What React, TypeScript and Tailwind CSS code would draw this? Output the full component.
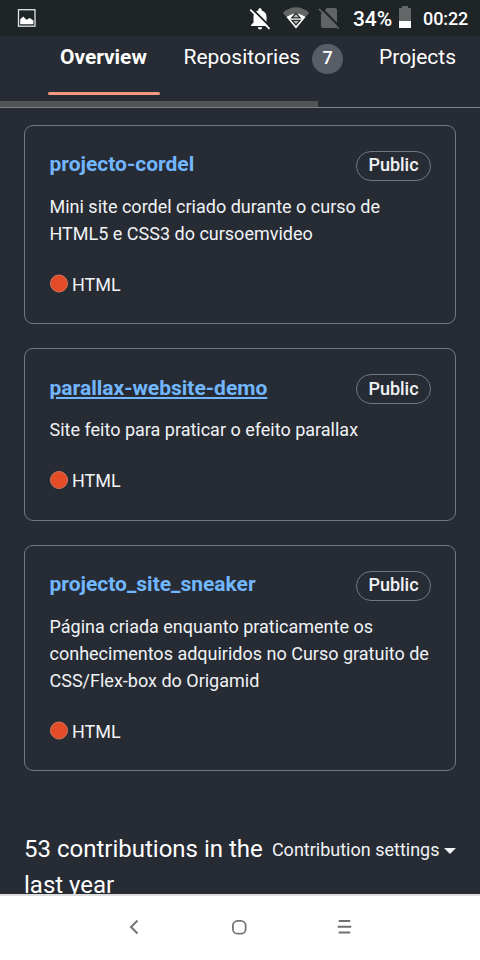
import React from "react";

type Repo = {
  name: string;
  lines: string[];
  height: string;
  underlined?: boolean;
};

const repos: Repo[] = [
  {
    name: "projecto-cordel",
    lines: ["Mini site cordel criado durante o curso de", "HTML5 e CSS3 do cursoemvideo"],
    height: "h-[199px]",
  },
  {
    name: "parallax-website-demo",
    lines: ["Site feito para praticar o efeito parallax"],
    height: "h-[173px]",
    underlined: true,
  },
  {
    name: "projecto_site_sneaker",
    lines: [
      "Página criada enquanto praticamente os",
      "conhecimentos adquiridos no Curso gratuito de",
      "CSS/Flex-box do Origamid",
    ],
    height: "h-[226px]",
  },
];

function StatusBar() {
  return (
    <div className="flex h-9 shrink-0 items-center bg-[#1f2427] text-white">
      <svg className="ml-[17px] h-5 w-5" viewBox="0 0 20 20">
        <rect x="1.5" y="1.7" width="16.500" height="16.500" fill="none" stroke="#dfe4e4" strokeWidth="1.300" />
        <path d="M3.200 16.200v-5l3-2.700 3.200 3.200 3.400-1.700 3.600 2.600v3.600z" fill="#fff" />
      </svg>
      <svg className="ml-[212px] h-6 w-[22px] translate-y-px" viewBox="0 0 22 24">
        <path
          d="M11 1.2c1 0 1.700.7 1.700 1.700v.6c3 .8 4.800 3.200 4.800 6.200v6.200l2 2v1H2v-1l2.500-2.300v-5.900c0-3 1.800-5.400 4.800-6.200v-.6c0-1 .7-1.700 1.700-1.700z"
          fill="#fff"
        />
        <path d="M8.800 20.200h4.400a2.200 2.200 0 0 1-4.400 0z" fill="#fff" />
        <path d="M2.700 1.300 22 20.600" stroke="#1f2427" strokeWidth="2" />
        <path d="M1.300 2.600 20.500 21.800" stroke="#fff" strokeWidth="1.800" />
      </svg>
      <svg className="ml-[11px] h-6 w-7" viewBox="0 0 28 24">
        <path d="M.8 6.700Q14-4.300 27.200 6.700L14 22.500z" fill="#626666" />
        <path d="M4.500 11Q14 3.800 23.500 11L14 22.500z" fill="#fff" />
        <path d="M10 11.800 14 7.200l4 4.600zM10 14.300l4 4.600 4-4.600z" fill="#bbb" stroke="#2b3031" strokeWidth="1.300" />
      </svg>
      <svg className="ml-2 h-6 w-6" viewBox="0 0 24 24">
        <path d="M9 2h8q2 0 2 2v16q0 2-2 2H5q-2 0-2-2V8z" fill="#606465" />
        <path d="M3 1.800 22 21.200" stroke="#1f2427" strokeWidth="2" />
        <path d="M1 3 20.600 22.700" stroke="#606465" strokeWidth="1.700" />
      </svg>
      <span className="ml-[11px] w-[40px] translate-y-px whitespace-nowrap text-[21px] leading-9 font-medium tracking-[-0.1px]">
        34%
      </span>
      <svg className="ml-[6px] h-[22px] w-3 -translate-y-px" viewBox="0 0 12 22">
        <path d="M3 0h6v2h3v13H0V2h3z" fill="#626666" />
        <path d="M0 15h12v7H0z" fill="#fff" />
      </svg>
      <span className="ml-3 translate-y-px whitespace-nowrap text-[18px] leading-9 font-medium tracking-[-0.1px]">00:22</span>
    </div>
  );
}

function Tabs() {
  return (
    <nav className="flex h-[72px] shrink-0 flex-col border-b border-[#7a828e] text-white">
      <div className="flex h-[59px] pl-[47.5px] text-[21px] leading-[31px]">
        <div className="flex w-[112px] flex-col justify-between">
          <span className="mt-[6px] pl-[12.5px] font-bold tracking-[-0.05px]">Overview</span>
          <span className="h-[3.500px] rounded-full bg-[#f59680]" />
        </div>
        <span className="mt-[6px] ml-6 w-[117px]">Repositories</span>
        <span className="mt-[8px] ml-[11.5px] h-[30px] w-[31px] rounded-full bg-[#585d66] text-center text-[18px] leading-[28px] font-medium">
          7
        </span>
        <span className="mt-[6px] ml-9">Projects</span>
      </div>
      <div className="mt-auto h-[6px] w-[318px] bg-[#535456]" />
    </nav>
  );
}

function RepoCard({ repo }: { repo: Repo }) {
  return (
    <article
      className={`flex flex-col rounded-[9px] border border-[#727782] pt-[23px] pr-[25px] pl-[24.5px] text-[#f0f3f6] ${repo.height}`}
    >
      <div className="flex h-[44px] items-start justify-between">
        <a
          className={`text-[21px] leading-[31px] font-bold text-[#71b7ff] ${
            repo.underlined ? "mt-px underline decoration-2 underline-offset-2" : ""
          }`}
        >
          {repo.name}
        </a>
        <span
          className={`mt-[2px] -mr-px h-[30px] w-[75px] rounded-full border border-[#727782] text-center text-[18px] font-medium ${
            repo.underlined ? "leading-[28px]" : "leading-[26px]"
          }`}
        >
          Public
        </span>
      </div>
      <p className="text-[18px] leading-[27px] whitespace-nowrap">
        {repo.lines.map((line) => (
          <span className="block" key={line}>
            {line}
          </span>
        ))}
      </p>
      <div className="mt-6 flex items-center text-[18px] leading-[27px]">
        <span
          className={`mr-[4.5px] h-[18px] w-[18px] rounded-full border border-[#d17661] bg-[#e34c26] ${
            repo.underlined ? "-translate-y-px" : "-translate-y-[1.500px]"
          }`}
        />
        HTML
      </div>
    </article>
  );
}

function NavigationBar() {
  return (
    <div className="flex h-[66px] shrink-0 items-center border-t-2 border-[#dedede] bg-white pb-[3px]">
      <svg className="ml-[126px] h-4 w-4" viewBox="0 0 16 16" fill="none" stroke="#757575" strokeWidth="2">
        <path d="M11.500 1.500 5 8l6.500 6.500" />
      </svg>
      <svg className="ml-[89px] h-4 w-4" viewBox="0 0 16 16" fill="none" stroke="#757575" strokeWidth="1.800">
        <rect x="1.900" y="1.900" width="12.800" height="12.800" rx="4.800" />
      </svg>
      <svg className="ml-[89px] h-4 w-4" viewBox="0 0 16 16" stroke="#707070" strokeWidth="2" strokeLinecap="round">
        <path d="M3.500 2h10M2.500 7.800h12M3.500 13.500h10" />
      </svg>
    </div>
  );
}

export default function App() {
  return (
    <div className="flex h-[960px] w-[480px] flex-col overflow-hidden bg-[#272b33] font-[Roboto,sans-serif]">
      <StatusBar />
      <Tabs />
      <main className="min-h-0 flex-1 overflow-hidden px-6 pt-[17px]">
        <div className="flex flex-col gap-6">
          {repos.map((repo) => (
            <RepoCard key={repo.name} repo={repo} />
          ))}
        </div>
        <div className="mt-[60px] flex items-start justify-between text-white">
          <h2 className="text-[24px] leading-9 whitespace-nowrap">
            53 contributions in the
            <br />
            last year
          </h2>
          <div className="mt-[5px] flex items-center text-[18px] leading-[27px] whitespace-nowrap text-[#f0f3f6]">
            Contribution settings
            <svg className="mt-[3px] ml-[4.5px] h-[6px] w-3" viewBox="0 0 12 6">
              <path d="M0 0h12L6 6z" fill="#f0f3f6" />
            </svg>
          </div>
        </div>
      </main>
      <NavigationBar />
    </div>
  );
}
